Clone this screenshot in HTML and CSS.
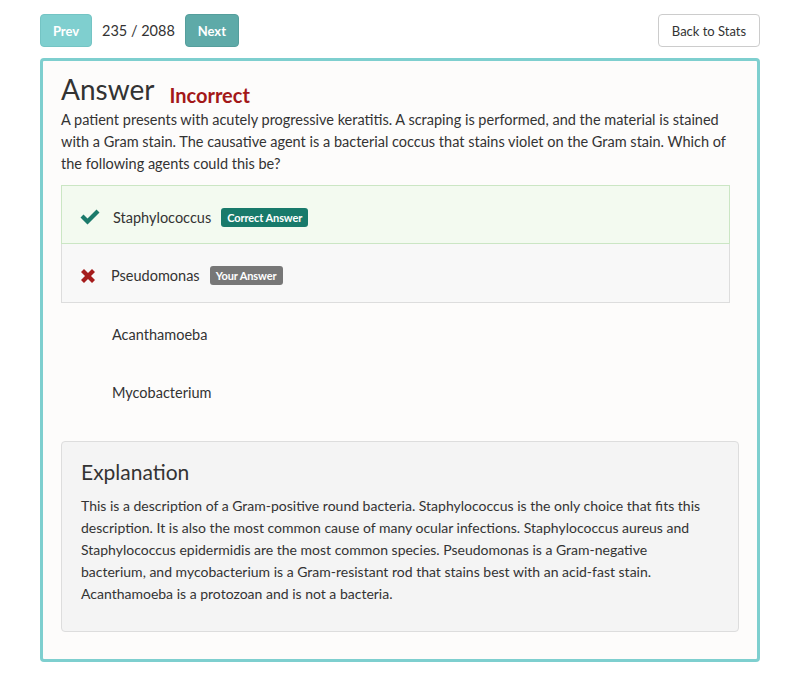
FILE: index.html
```html
<!DOCTYPE html>
<html>
<head>
<meta charset="utf-8">
<link rel="stylesheet" href="styles.css">
</head>
<body>
<div class="page">
  <div class="topbar">
    <div class="nav">
      <button class="btn btn-prev">Prev</button>
      <span class="count">235 / 2088</span>
      <button class="btn btn-next">Next</button>
    </div>
    <button class="btn btn-back">Back to Stats</button>
  </div>
  <div class="card">
    <div class="title-row">
      <h1 class="title">Answer</h1>
      <span class="status">Incorrect</span>
    </div>
    <p class="question">A patient presents with acutely progressive keratitis. A scraping is performed, and the material is stained with a Gram stain. The causative agent is a bacterial coccus that stains violet on the Gram stain. Which of the following agents could this be?</p>
    <ul class="options">
      <li class="option correct">
        <span class="icon"><svg width="22" height="18" viewBox="0 0 22 18"><path d="M1.5 9.5 L4.5 6.5 L8.5 10.5 L17.5 1.5 L20.5 4.5 L8.5 16.5 Z" fill="#1b7a6b"/></svg></span>
        <span class="label">Staphylococcus</span>
        <span class="badge badge-correct">Correct Answer</span>
      </li>
      <li class="option wrong">
        <span class="icon"><svg width="18" height="18" viewBox="0 0 18 18"><path d="M2 5 L5 2 L9 6 L13 2 L16 5 L12 9 L16 13 L13 16 L9 12 L5 16 L2 13 L6 9 Z" fill="#a51c1c"/></svg></span>
        <span class="label">Pseudomonas</span>
        <span class="badge badge-yours">Your Answer</span>
      </li>
      <li class="option plain">
        <span class="icon"></span>
        <span class="label">Acanthamoeba</span>
      </li>
      <li class="option plain">
        <span class="icon"></span>
        <span class="label">Mycobacterium</span>
      </li>
    </ul>
    <div class="explanation">
      <h2 class="exp-title">Explanation</h2>
      <p class="exp-text">This is a description of a Gram-positive round bacteria. Staphylococcus is the only choice that fits this description. It is also the most common cause of many ocular infections. Staphylococcus aureus and Staphylococcus epidermidis are the most common species. Pseudomonas is a Gram-negative bacterium, and mycobacterium is a Gram-resistant rod that stains best with an acid-fast stain. Acanthamoeba is a protozoan and is not a bacteria.</p>
    </div>
  </div>
</div>
</body>
</html>
```

FILE: styles.css
```css
* { box-sizing: border-box; }
body {
  margin: 0;
  background: #ffffff;
  font-family: Lato, "Open Sans", sans-serif;
  color: #333333;
}
.page {
  width: 720px;
  margin: 0 auto;
  padding-top: 14px;
}
.topbar {
  display: flex;
  justify-content: space-between;
  align-items: center;
  height: 33px;
}
.nav {
  display: flex;
  align-items: center;
}
.btn {
  font-family: Lato, sans-serif;
  height: 33px;
  border-radius: 4px;
  font-size: 13px;
  cursor: pointer;
}
.btn-prev, .btn-next {
  border: 1px solid transparent;
  color: #ffffff;
  font-weight: bold;
  padding: 0 10px;
}
.btn-prev {
  background: #7fcfcf;
  border-color: #74c4c4;
  width: 52px;
}
.btn-next {
  background: #5eaaa8;
  border-color: #559e9c;
  width: 54px;
}
.count {
  font-size: 14.5px;
  margin: 0 10px;
  color: #333;
}
.btn-back {
  background: #ffffff;
  border: 1px solid #cccccc;
  color: #333;
  width: 102px;
  padding: 0;
}
.card {
  margin-top: 11px;
  border: 3px solid #7ecfcf;
  border-radius: 4px;
  background: #fdfcfb;
  padding: 8px 18px 29px 18px;
  height: 604px;
}
.title-row {
  display: flex;
  align-items: baseline;
}
.title {
  font-size: 28px;
  font-weight: normal;
  margin: 0;
  line-height: 40px;
  color: #333;
}
.status {
  color: #a31818;
  font-weight: bold;
  font-size: 20px;
  margin-left: 15px;
  position: relative;
  top: 3px;
}
.question {
  margin: 0;
  font-size: 14.5px;
  line-height: 22px;
  color: #333;
}
.options {
  list-style: none;
  margin: 10px 9px 0 0;
  padding: 0;
}
.option {
  display: flex;
  align-items: center;
  height: 58px;
  padding-top: 5px;
  font-size: 14.5px;
  border: 1px solid transparent;
}
.option.correct {
  background: #f3faf0;
  border-color: #cbe6c4;
  height: 59px;
}
.option.wrong {
  background: #f8f8f8;
  border-color: #dddddd;
  border-top: none;
  height: 59px;
}
.icon {
  width: 50px;
  display: flex;
  justify-content: center;
  padding-left: 4px;
}
.correct .icon { width: 51px; }
.wrong .icon { width: 49px; padding-left: 2px; }
.label { color: #333; }
.badge {
  display: inline-block;
  color: #fff;
  font-weight: bold;
  font-size: 11px;
  line-height: 19px;
  padding: 0 6px;
  border-radius: 3px;
  margin-left: 10px;
  letter-spacing: -0.1px;
}
.badge-correct { background: #187a6b; }
.badge-yours { background: #777777; }
.explanation {
  margin-top: 22px;
  background: #f4f4f4;
  border: 1px solid #dddddd;
  border-radius: 4px;
  padding: 15px 30px 26px 19px;
}
.exp-title {
  font-size: 21px;
  font-weight: normal;
  margin: 0 0 8px 0;
  line-height: 30px;
  color: #333;
}
.exp-text {
  margin: 0;
  font-size: 14px;
  line-height: 22px;
  color: #333;
}
```
